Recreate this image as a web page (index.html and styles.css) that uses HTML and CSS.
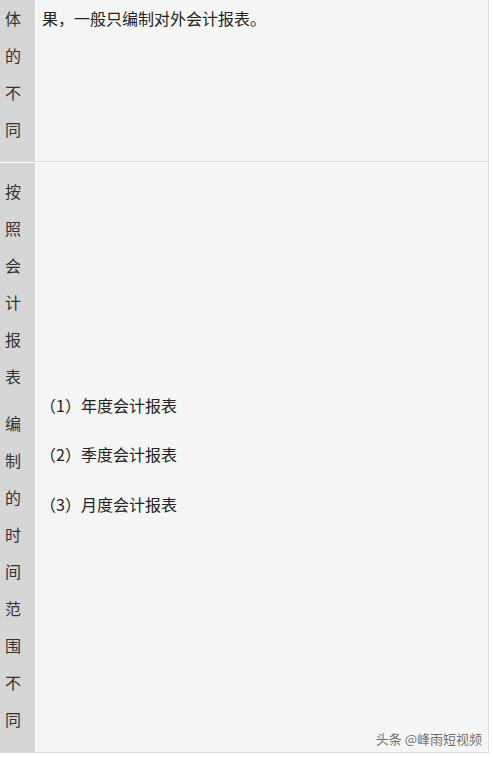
FILE: index.html
```html
<!DOCTYPE html>
<html lang="zh-CN">
<head>
  <meta charset="UTF-8" />
  <title>会计报表的分类</title>
  <link rel="stylesheet" href="styles.css">
</head>
<body>
  <div class="table">
    <!-- 第一行（上方被截断） -->
    <div class="row row-top">
      <div class="label">
        <span>体</span><span>的</span><span>不</span><span>同</span>
      </div>
      <div class="content content-top">
        <p>果，一般只编制对外会计报表。</p>
      </div>
    </div>

    <!-- 第二行 -->
    <div class="row row-time">
      <div class="label">
        <div class="group">
          <span>按</span><span>照</span><span>会</span><span>计</span><span>报</span><span>表</span>
        </div>
        <div class="group">
          <span>编</span><span>制</span><span>的</span><span>时</span><span>间</span><span>范</span><span>围</span><span>不</span><span>同</span>
        </div>
      </div>
      <div class="content content-middle">
        <p>（1）年度会计报表</p>
        <p>（2）季度会计报表</p>
        <p>（3）月度会计报表</p>
      </div>
    </div>
  </div>

  <div class="watermark">头条 @峰雨短视频</div>
</body>
</html>
```

FILE: styles.css
```css
body {
  margin: 0;
  background-color: #ffffff;
  font-family: "Liberation Serif", "Noto Sans CJK SC", serif;
  font-size: 16px;
  color: #222;
  width: 493px;
  height: 757px;
  overflow: hidden;
  position: relative;
}

.table {
  width: 488px;
  border-right: 1px solid #dcdcdc;
}

.row {
  display: grid;
  grid-template-columns: 35px 1fr;
  column-gap: 1px;
  border-bottom: 1px solid #dcdcdc;
}

.row-top {
  height: 161px;
  margin-bottom: 1px;
}

.row-time {
  height: 589px;
}

.label {
  background-color: #d6d6d6;
  padding-left: 5px;
  display: flex;
  flex-direction: column;
  font-family: "Noto Sans CJK SC", sans-serif;
  color: #333;
}

.label span {
  display: block;
  line-height: 37.1px;
  height: 37.1px;
}

.row-top .label {
  padding-top: 0;
}

.row-time .label {
  padding-top: 10px;
}

.group + .group {
  margin-top: 9px;
}

.content {
  background-color: #f5f5f5;
  font-family: "Noto Sans CJK SC", sans-serif;
}

.content p {
  margin: 0;
  line-height: 37.3px;
}

.content-top {
  padding-left: 6px;
}

.content-middle {
  display: flex;
  flex-direction: column;
  justify-content: center;
  padding-left: 4px;
  padding-bottom: 5px;
}

.content-middle p + p {
  margin-top: 12px;
}

.watermark {
  position: absolute;
  right: 11px;
  bottom: 9px;
  font-family: "Noto Sans CJK SC", sans-serif;
  font-size: 13px;
  color: #555;
  text-shadow: 0 0 2px #fff, 0 0 2px #fff;
  opacity: 0.85;
}
```
